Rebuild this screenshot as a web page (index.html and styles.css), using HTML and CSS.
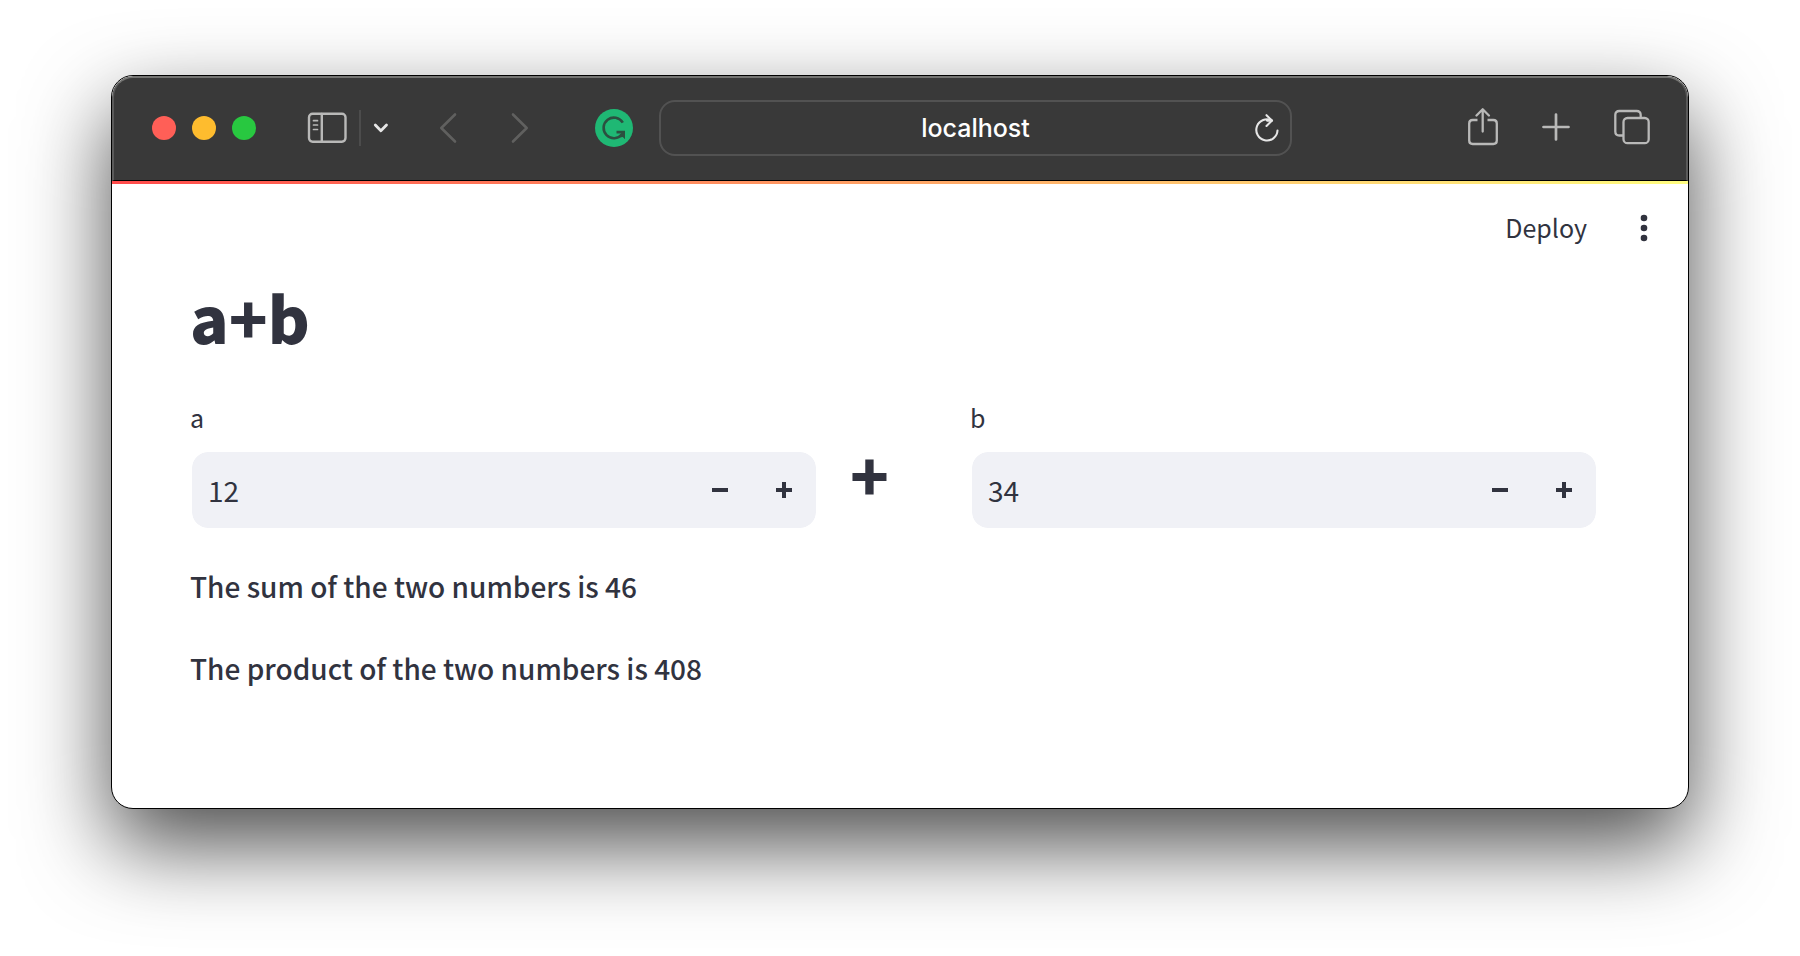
FILE: index.html
```html
<!DOCTYPE html>
<html lang="en">
<head>
  <meta charset="utf-8">
  <title>a+b</title>
  <link rel="stylesheet" href="styles.css">
</head>
<body>
  <div class="window">
    <header class="toolbar">
      <div class="lights">
        <button class="light close" aria-label="Close"></button>
        <button class="light minimize" aria-label="Minimize"></button>
        <button class="light maximize" aria-label="Maximize"></button>
      </div>
      <div class="sidebar-tools">
        <button class="tool" aria-label="Sidebar">
          <svg width="40" height="32" viewBox="0 0 40 32" fill="none" stroke="#b9b9b8" stroke-width="2.4" stroke-linecap="round">
            <rect x="2" y="1.7" width="36.5" height="28" rx="3.6"/>
            <path d="M14.800 2v27.500"/>
            <path d="M6.500 8.700h4M6.500 13h4M6.500 17.500h4" stroke-width="1.700"/>
          </svg>
        </button>
        <span class="divider"></span>
        <button class="tool" aria-label="Tab groups">
          <svg width="16" height="12" viewBox="0 0 16 12" fill="none" stroke="#e6e6e6" stroke-width="2.800" stroke-linecap="round" stroke-linejoin="round"><path d="M2.300 3l5.600 5.700L13.500 3"/></svg>
        </button>
      </div>
      <div class="history">
        <button class="tool" aria-label="Back">
          <svg width="18" height="32" viewBox="0 0 18 32" fill="none" stroke="#60605f" stroke-width="2.600" stroke-linecap="round" stroke-linejoin="round"><path d="M16 2.500L2.300 16L16 29.500"/></svg>
        </button>
        <button class="tool" aria-label="Forward">
          <svg width="18" height="32" viewBox="0 0 18 32" fill="none" stroke="#60605f" stroke-width="2.600" stroke-linecap="round" stroke-linejoin="round"><path d="M2 2.500L15.700 16L2 29.500"/></svg>
        </button>
      </div>
      <button class="tool" aria-label="Grammarly">
        <svg width="38" height="38" viewBox="0 0 38 38">
          <circle cx="19" cy="19" r="19" fill="#1fb874"/>
          <path d="M27.800 13.700A10.300 10.300 0 1 0 27 25.300" fill="none" stroke="#2b5040" stroke-width="2.600"/>
          <path d="M21.500 21.800H30V30.200L27.800 28L24.500 28.500L26.200 24.400H21.500Z" fill="#2b5040"/>
        </svg>
      </button>
      <div class="address">
        <input class="url" type="text" value="localhost" aria-label="Address">
        <button class="tool reload" aria-label="Reload">
          <svg width="24" height="28" viewBox="0 0 24 28" fill="none" stroke="#e6e6e6" stroke-width="2.100" stroke-linecap="round" stroke-linejoin="round">
            <path d="M22.500 16.500A10.600 10.600 0 1 1 17 6.600H12"/>
            <path d="M11.500 1.200L17 6.600L11.500 12"/>
          </svg>
        </button>
      </div>
      <div class="actions">
        <button class="tool" aria-label="Share">
          <svg width="30" height="38" viewBox="0 0 30 38" fill="none" stroke="#b9b9b8" stroke-width="2.300" stroke-linecap="round" stroke-linejoin="round">
            <path d="M9.500 12H4.700Q1.200 12 1.200 15.500V32.500Q1.200 36 4.700 36H25.300Q28.800 36 28.800 32.500V15.500Q28.800 12 25.300 12H19.500" stroke-linecap="butt"/>
            <path d="M14.700 23.500V2M8.500 7.500L14.700 1.300L20.900 7.500"/>
          </svg>
        </button>
        <button class="tool" aria-label="New tab">
          <svg width="28" height="28" viewBox="0 0 28 28" fill="none" stroke="#b9b9b8" stroke-width="2.700" stroke-linecap="round"><path d="M14 1.500v25M1.500 14h25"/></svg>
        </button>
        <button class="tool" aria-label="Tab overview">
          <svg width="36" height="36" viewBox="0 0 36 36" fill="none" stroke="#b9b9b8" stroke-width="2.300">
            <rect x="9.500" y="9" width="25.200" height="25.200" rx="4"/>
            <path d="M26.700 8.500V6Q26.700 2 22.700 2H5.300Q1.300 2 1.300 6V22.500Q1.300 26.500 5.300 26.500H9"/>
          </svg>
        </button>
      </div>
    </header>
    <div class="decoration"></div>
    <div class="app-bar">
      <button class="deploy">Deploy</button>
      <button class="tool" aria-label="Menu">
        <svg width="8" height="28" viewBox="0 0 8 28" fill="#31333f"><circle cx="4" cy="4" r="3.300"/><circle cx="4" cy="14" r="3.300"/><circle cx="4" cy="24" r="3.300"/></svg>
      </button>
    </div>
    <main class="content">
      <h1 class="title">a+b</h1>
      <div class="columns">
        <div class="field">
          <label class="label" for="a">a</label>
          <div class="number">
            <input class="value" id="a" type="number" value="12">
            <button class="step" aria-label="Decrease a"><svg width="16" height="16" viewBox="0 0 16 16" fill="#31333f"><path d="M0 6h16v4H0z"/></svg></button>
            <button class="step" aria-label="Increase a"><svg width="16" height="16" viewBox="0 0 16 16" fill="#31333f"><path d="M6 0h4v6h6v4h-6v6H6v-6H0V6h6z"/></svg></button>
          </div>
        </div>
        <div class="operator">+</div>
        <div class="field">
          <label class="label" for="b">b</label>
          <div class="number">
            <input class="value" id="b" type="number" value="34">
            <button class="step" aria-label="Decrease b"><svg width="16" height="16" viewBox="0 0 16 16" fill="#31333f"><path d="M0 6h16v4H0z"/></svg></button>
            <button class="step" aria-label="Increase b"><svg width="16" height="16" viewBox="0 0 16 16" fill="#31333f"><path d="M6 0h4v6h6v4h-6v6H6v-6H0V6h6z"/></svg></button>
          </div>
        </div>
      </div>
      <div class="results">
        <p class="result">The sum of the two numbers is 46</p>
        <p class="result">The product of the two numbers is 408</p>
      </div>
    </main>
  </div>
</body>
</html>
```
FILE: styles.css
```css
* {
  box-sizing: border-box;
}

body {
  margin: 0;
  padding: 75px 111px 147px;
  background: #fff;
  color: #31333f;
  font-family: "Noto Sans CJK SC", "Noto Sans", sans-serif;
}

button,
input {
  margin: 0;
  padding: 0;
  border: 0;
  background: none;
  color: inherit;
  font: inherit;
}

svg {
  display: block;
}

.window {
  border: 1px solid #000;
  border-radius: 22px;
  overflow: hidden;
  background: #fff;
  box-shadow: 0 36px 86px rgba(0, 0, 0, 0.7);
}

.toolbar {
  display: flex;
  align-items: center;
  height: 105px;
  padding: 0 36px 2px 38px;
  border: 2px solid #5a5a5a;
  border-top-color: #747472;
  border-bottom: 1px solid #000;
  border-radius: 21px 21px 0 0;
  background: #393939;
}

.tool {
  flex: none;
}

.lights {
  display: flex;
  gap: 16px;
}

.light {
  width: 24px;
  height: 24px;
  border-radius: 50%;
}

.close {
  background: #ff5f57;
}

.minimize {
  background: #febc2e;
}

.maximize {
  background: #28c840;
}

.sidebar-tools {
  display: flex;
  align-items: center;
  gap: 12px;
  margin-left: 51px;
}

.divider {
  width: 2px;
  height: 36px;
  background: #4c4c4c;
}

.history {
  display: flex;
  gap: 54px;
  margin: 0 66px 0 50px;
}

.address {
  display: flex;
  flex: 1;
  align-items: center;
  height: 56px;
  margin: 0 176px 0 26px;
  padding: 0 11px 0 35px;
  border: 2px solid #525252;
  border-radius: 16px;
}

.url {
  flex: 1;
  min-width: 0;
  color: #fff;
  font-family: Inter, "Liberation Sans", sans-serif;
  font-size: 25px;
  font-weight: 500;
  text-align: center;
}

.actions {
  display: flex;
  align-items: center;
  gap: 44px;
  padding-bottom: 2px;
}

.decoration {
  height: 3px;
  background: linear-gradient(90deg, #ff4b4b, #fffd80);
}

.app-bar {
  display: flex;
  align-items: center;
  justify-content: flex-end;
  gap: 53px;
  height: 88px;
  padding-right: 40px;
}

.deploy {
  padding-bottom: 2px;
  font-size: 25px;
  line-height: 40px;
}

.content {
  padding: 4px 90px 115px 78px;
}

.title,
.operator {
  font-size: 64px;
  font-weight: 900;
  line-height: 80px;
}

.title {
  margin: 0 0 41px;
}

.columns {
  display: grid;
  grid-template-columns: 1fr 88px 1fr;
  gap: 32px;
}

.operator {
  padding-top: 36px;
}

.label {
  display: block;
  margin-bottom: 13px;
  font-size: 25px;
  line-height: 40px;
}

.number {
  display: flex;
  height: 80px;
  border: 2px solid #fff;
  border-radius: 18px;
  background: #f0f1f6;
  background-clip: padding-box;
}

.value {
  flex: 1;
  min-width: 0;
  padding-left: 16px;
  font-size: 28px;
  appearance: textfield;
}

.value::-webkit-inner-spin-button {
  display: none;
}

.step {
  display: grid;
  place-items: center;
  width: 64px;
}

.results {
  display: grid;
  gap: 32px;
  padding-top: 31px;
}

.result {
  margin: 0;
  font-size: 28px;
  font-weight: 500;
  line-height: 50px;
}
```
